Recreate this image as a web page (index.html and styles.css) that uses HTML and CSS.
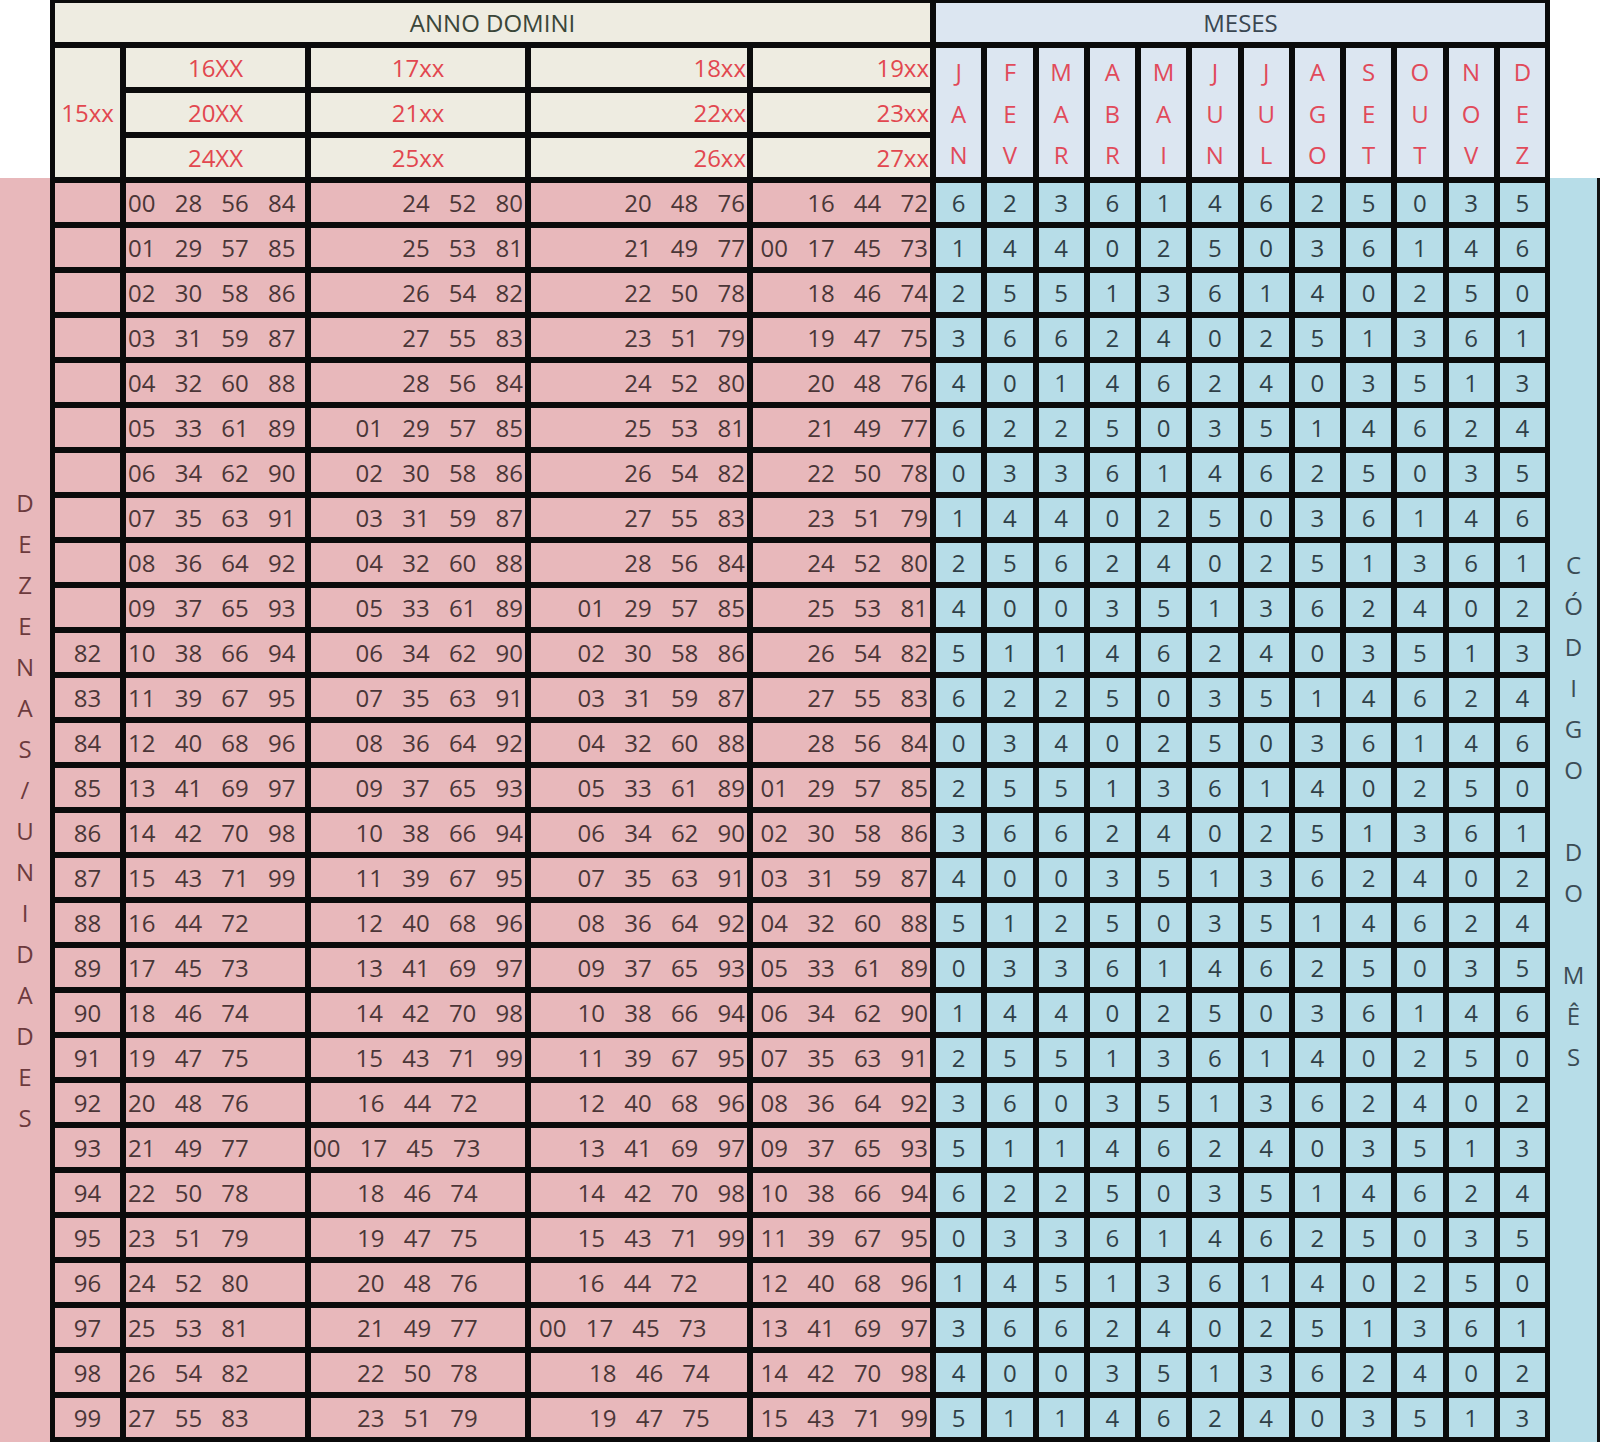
FILE: index.html
```html
<!DOCTYPE html>
<html lang="pt">
<head>
<meta charset="utf-8">
<title>Calendário perpétuo</title>
<link rel="stylesheet" href="styles.css">
</head>
<body>
<div class="page">
  <div class="strip strip-l"><span>D</span><span>E</span><span>Z</span><span>E</span><span>N</span><span>A</span><span>S</span><span>/</span><span>U</span><span>N</span><span>I</span><span>D</span><span>A</span><span>D</span><span>E</span><span>S</span></div>
  <div class="tbl">
    <div class="c hd ttl">ANNO DOMINI</div>
    <div class="c ttl-m">MESES</div>
    <div class="c hd y15">15xx</div>
    <div class="c hd">16XX</div>
    <div class="c hd">17xx</div>
    <div class="c hd hr">18xx</div>
    <div class="c hd hr">19xx</div>
    <div class="c mh"><span>J</span><span>A</span><span>N</span></div>
    <div class="c mh"><span>F</span><span>E</span><span>V</span></div>
    <div class="c mh"><span>M</span><span>A</span><span>R</span></div>
    <div class="c mh"><span>A</span><span>B</span><span>R</span></div>
    <div class="c mh"><span>M</span><span>A</span><span>I</span></div>
    <div class="c mh"><span>J</span><span>U</span><span>N</span></div>
    <div class="c mh"><span>J</span><span>U</span><span>L</span></div>
    <div class="c mh"><span>A</span><span>G</span><span>O</span></div>
    <div class="c mh"><span>S</span><span>E</span><span>T</span></div>
    <div class="c mh"><span>O</span><span>U</span><span>T</span></div>
    <div class="c mh"><span>N</span><span>O</span><span>V</span></div>
    <div class="c mh"><span>D</span><span>E</span><span>Z</span></div>
    <div class="c hd">20XX</div>
    <div class="c hd">21xx</div>
    <div class="c hd hr">22xx</div>
    <div class="c hd hr">23xx</div>
    <div class="c hd">24XX</div>
    <div class="c hd">25xx</div>
    <div class="c hd hr">26xx</div>
    <div class="c hd hr">27xx</div>

    <div class="c p k"></div><div class="c p l">00 28 56 84</div><div class="c p r">24 52 80</div><div class="c p r">20 48 76</div><div class="c p r">16 44 72</div><div class="c b">6</div><div class="c b">2</div><div class="c b">3</div><div class="c b">6</div><div class="c b">1</div><div class="c b">4</div><div class="c b">6</div><div class="c b">2</div><div class="c b">5</div><div class="c b">0</div><div class="c b">3</div><div class="c b">5</div>
    <div class="c p k"></div><div class="c p l">01 29 57 85</div><div class="c p r">25 53 81</div><div class="c p r">21 49 77</div><div class="c p r">00 17 45 73</div><div class="c b">1</div><div class="c b">4</div><div class="c b">4</div><div class="c b">0</div><div class="c b">2</div><div class="c b">5</div><div class="c b">0</div><div class="c b">3</div><div class="c b">6</div><div class="c b">1</div><div class="c b">4</div><div class="c b">6</div>
    <div class="c p k"></div><div class="c p l">02 30 58 86</div><div class="c p r">26 54 82</div><div class="c p r">22 50 78</div><div class="c p r">18 46 74</div><div class="c b">2</div><div class="c b">5</div><div class="c b">5</div><div class="c b">1</div><div class="c b">3</div><div class="c b">6</div><div class="c b">1</div><div class="c b">4</div><div class="c b">0</div><div class="c b">2</div><div class="c b">5</div><div class="c b">0</div>
    <div class="c p k"></div><div class="c p l">03 31 59 87</div><div class="c p r">27 55 83</div><div class="c p r">23 51 79</div><div class="c p r">19 47 75</div><div class="c b">3</div><div class="c b">6</div><div class="c b">6</div><div class="c b">2</div><div class="c b">4</div><div class="c b">0</div><div class="c b">2</div><div class="c b">5</div><div class="c b">1</div><div class="c b">3</div><div class="c b">6</div><div class="c b">1</div>
    <div class="c p k"></div><div class="c p l">04 32 60 88</div><div class="c p r">28 56 84</div><div class="c p r">24 52 80</div><div class="c p r">20 48 76</div><div class="c b">4</div><div class="c b">0</div><div class="c b">1</div><div class="c b">4</div><div class="c b">6</div><div class="c b">2</div><div class="c b">4</div><div class="c b">0</div><div class="c b">3</div><div class="c b">5</div><div class="c b">1</div><div class="c b">3</div>
    <div class="c p k"></div><div class="c p l">05 33 61 89</div><div class="c p r">01 29 57 85</div><div class="c p r">25 53 81</div><div class="c p r">21 49 77</div><div class="c b">6</div><div class="c b">2</div><div class="c b">2</div><div class="c b">5</div><div class="c b">0</div><div class="c b">3</div><div class="c b">5</div><div class="c b">1</div><div class="c b">4</div><div class="c b">6</div><div class="c b">2</div><div class="c b">4</div>
    <div class="c p k"></div><div class="c p l">06 34 62 90</div><div class="c p r">02 30 58 86</div><div class="c p r">26 54 82</div><div class="c p r">22 50 78</div><div class="c b">0</div><div class="c b">3</div><div class="c b">3</div><div class="c b">6</div><div class="c b">1</div><div class="c b">4</div><div class="c b">6</div><div class="c b">2</div><div class="c b">5</div><div class="c b">0</div><div class="c b">3</div><div class="c b">5</div>
    <div class="c p k"></div><div class="c p l">07 35 63 91</div><div class="c p r">03 31 59 87</div><div class="c p r">27 55 83</div><div class="c p r">23 51 79</div><div class="c b">1</div><div class="c b">4</div><div class="c b">4</div><div class="c b">0</div><div class="c b">2</div><div class="c b">5</div><div class="c b">0</div><div class="c b">3</div><div class="c b">6</div><div class="c b">1</div><div class="c b">4</div><div class="c b">6</div>
    <div class="c p k"></div><div class="c p l">08 36 64 92</div><div class="c p r">04 32 60 88</div><div class="c p r">28 56 84</div><div class="c p r">24 52 80</div><div class="c b">2</div><div class="c b">5</div><div class="c b">6</div><div class="c b">2</div><div class="c b">4</div><div class="c b">0</div><div class="c b">2</div><div class="c b">5</div><div class="c b">1</div><div class="c b">3</div><div class="c b">6</div><div class="c b">1</div>
    <div class="c p k"></div><div class="c p l">09 37 65 93</div><div class="c p r">05 33 61 89</div><div class="c p r">01 29 57 85</div><div class="c p r">25 53 81</div><div class="c b">4</div><div class="c b">0</div><div class="c b">0</div><div class="c b">3</div><div class="c b">5</div><div class="c b">1</div><div class="c b">3</div><div class="c b">6</div><div class="c b">2</div><div class="c b">4</div><div class="c b">0</div><div class="c b">2</div>
    <div class="c p k">82</div><div class="c p l">10 38 66 94</div><div class="c p r">06 34 62 90</div><div class="c p r">02 30 58 86</div><div class="c p r">26 54 82</div><div class="c b">5</div><div class="c b">1</div><div class="c b">1</div><div class="c b">4</div><div class="c b">6</div><div class="c b">2</div><div class="c b">4</div><div class="c b">0</div><div class="c b">3</div><div class="c b">5</div><div class="c b">1</div><div class="c b">3</div>
    <div class="c p k">83</div><div class="c p l">11 39 67 95</div><div class="c p r">07 35 63 91</div><div class="c p r">03 31 59 87</div><div class="c p r">27 55 83</div><div class="c b">6</div><div class="c b">2</div><div class="c b">2</div><div class="c b">5</div><div class="c b">0</div><div class="c b">3</div><div class="c b">5</div><div class="c b">1</div><div class="c b">4</div><div class="c b">6</div><div class="c b">2</div><div class="c b">4</div>
    <div class="c p k">84</div><div class="c p l">12 40 68 96</div><div class="c p r">08 36 64 92</div><div class="c p r">04 32 60 88</div><div class="c p r">28 56 84</div><div class="c b">0</div><div class="c b">3</div><div class="c b">4</div><div class="c b">0</div><div class="c b">2</div><div class="c b">5</div><div class="c b">0</div><div class="c b">3</div><div class="c b">6</div><div class="c b">1</div><div class="c b">4</div><div class="c b">6</div>
    <div class="c p k">85</div><div class="c p l">13 41 69 97</div><div class="c p r">09 37 65 93</div><div class="c p r">05 33 61 89</div><div class="c p r">01 29 57 85</div><div class="c b">2</div><div class="c b">5</div><div class="c b">5</div><div class="c b">1</div><div class="c b">3</div><div class="c b">6</div><div class="c b">1</div><div class="c b">4</div><div class="c b">0</div><div class="c b">2</div><div class="c b">5</div><div class="c b">0</div>
    <div class="c p k">86</div><div class="c p l">14 42 70 98</div><div class="c p r">10 38 66 94</div><div class="c p r">06 34 62 90</div><div class="c p r">02 30 58 86</div><div class="c b">3</div><div class="c b">6</div><div class="c b">6</div><div class="c b">2</div><div class="c b">4</div><div class="c b">0</div><div class="c b">2</div><div class="c b">5</div><div class="c b">1</div><div class="c b">3</div><div class="c b">6</div><div class="c b">1</div>
    <div class="c p k">87</div><div class="c p l">15 43 71 99</div><div class="c p r">11 39 67 95</div><div class="c p r">07 35 63 91</div><div class="c p r">03 31 59 87</div><div class="c b">4</div><div class="c b">0</div><div class="c b">0</div><div class="c b">3</div><div class="c b">5</div><div class="c b">1</div><div class="c b">3</div><div class="c b">6</div><div class="c b">2</div><div class="c b">4</div><div class="c b">0</div><div class="c b">2</div>
    <div class="c p k">88</div><div class="c p l">16 44 72</div><div class="c p r">12 40 68 96</div><div class="c p r">08 36 64 92</div><div class="c p r">04 32 60 88</div><div class="c b">5</div><div class="c b">1</div><div class="c b">2</div><div class="c b">5</div><div class="c b">0</div><div class="c b">3</div><div class="c b">5</div><div class="c b">1</div><div class="c b">4</div><div class="c b">6</div><div class="c b">2</div><div class="c b">4</div>
    <div class="c p k">89</div><div class="c p l">17 45 73</div><div class="c p r">13 41 69 97</div><div class="c p r">09 37 65 93</div><div class="c p r">05 33 61 89</div><div class="c b">0</div><div class="c b">3</div><div class="c b">3</div><div class="c b">6</div><div class="c b">1</div><div class="c b">4</div><div class="c b">6</div><div class="c b">2</div><div class="c b">5</div><div class="c b">0</div><div class="c b">3</div><div class="c b">5</div>
    <div class="c p k">90</div><div class="c p l">18 46 74</div><div class="c p r">14 42 70 98</div><div class="c p r">10 38 66 94</div><div class="c p r">06 34 62 90</div><div class="c b">1</div><div class="c b">4</div><div class="c b">4</div><div class="c b">0</div><div class="c b">2</div><div class="c b">5</div><div class="c b">0</div><div class="c b">3</div><div class="c b">6</div><div class="c b">1</div><div class="c b">4</div><div class="c b">6</div>
    <div class="c p k">91</div><div class="c p l">19 47 75</div><div class="c p r">15 43 71 99</div><div class="c p r">11 39 67 95</div><div class="c p r">07 35 63 91</div><div class="c b">2</div><div class="c b">5</div><div class="c b">5</div><div class="c b">1</div><div class="c b">3</div><div class="c b">6</div><div class="c b">1</div><div class="c b">4</div><div class="c b">0</div><div class="c b">2</div><div class="c b">5</div><div class="c b">0</div>
    <div class="c p k">92</div><div class="c p l">20 48 76</div><div class="c p l in1">16 44 72</div><div class="c p r">12 40 68 96</div><div class="c p r">08 36 64 92</div><div class="c b">3</div><div class="c b">6</div><div class="c b">0</div><div class="c b">3</div><div class="c b">5</div><div class="c b">1</div><div class="c b">3</div><div class="c b">6</div><div class="c b">2</div><div class="c b">4</div><div class="c b">0</div><div class="c b">2</div>
    <div class="c p k">93</div><div class="c p l">21 49 77</div><div class="c p l">00 17 45 73</div><div class="c p r">13 41 69 97</div><div class="c p r">09 37 65 93</div><div class="c b">5</div><div class="c b">1</div><div class="c b">1</div><div class="c b">4</div><div class="c b">6</div><div class="c b">2</div><div class="c b">4</div><div class="c b">0</div><div class="c b">3</div><div class="c b">5</div><div class="c b">1</div><div class="c b">3</div>
    <div class="c p k">94</div><div class="c p l">22 50 78</div><div class="c p l in1">18 46 74</div><div class="c p r">14 42 70 98</div><div class="c p r">10 38 66 94</div><div class="c b">6</div><div class="c b">2</div><div class="c b">2</div><div class="c b">5</div><div class="c b">0</div><div class="c b">3</div><div class="c b">5</div><div class="c b">1</div><div class="c b">4</div><div class="c b">6</div><div class="c b">2</div><div class="c b">4</div>
    <div class="c p k">95</div><div class="c p l">23 51 79</div><div class="c p l in1">19 47 75</div><div class="c p r">15 43 71 99</div><div class="c p r">11 39 67 95</div><div class="c b">0</div><div class="c b">3</div><div class="c b">3</div><div class="c b">6</div><div class="c b">1</div><div class="c b">4</div><div class="c b">6</div><div class="c b">2</div><div class="c b">5</div><div class="c b">0</div><div class="c b">3</div><div class="c b">5</div>
    <div class="c p k">96</div><div class="c p l">24 52 80</div><div class="c p l in1">20 48 76</div><div class="c p l in1">16 44 72</div><div class="c p r">12 40 68 96</div><div class="c b">1</div><div class="c b">4</div><div class="c b">5</div><div class="c b">1</div><div class="c b">3</div><div class="c b">6</div><div class="c b">1</div><div class="c b">4</div><div class="c b">0</div><div class="c b">2</div><div class="c b">5</div><div class="c b">0</div>
    <div class="c p k">97</div><div class="c p l">25 53 81</div><div class="c p l in1">21 49 77</div><div class="c p l in0">00 17 45 73</div><div class="c p r">13 41 69 97</div><div class="c b">3</div><div class="c b">6</div><div class="c b">6</div><div class="c b">2</div><div class="c b">4</div><div class="c b">0</div><div class="c b">2</div><div class="c b">5</div><div class="c b">1</div><div class="c b">3</div><div class="c b">6</div><div class="c b">1</div>
    <div class="c p k">98</div><div class="c p l">26 54 82</div><div class="c p l in1">22 50 78</div><div class="c p l in2">18 46 74</div><div class="c p r">14 42 70 98</div><div class="c b">4</div><div class="c b">0</div><div class="c b">0</div><div class="c b">3</div><div class="c b">5</div><div class="c b">1</div><div class="c b">3</div><div class="c b">6</div><div class="c b">2</div><div class="c b">4</div><div class="c b">0</div><div class="c b">2</div>
    <div class="c p k">99</div><div class="c p l">27 55 83</div><div class="c p l in1">23 51 79</div><div class="c p l in2">19 47 75</div><div class="c p r">15 43 71 99</div><div class="c b">5</div><div class="c b">1</div><div class="c b">1</div><div class="c b">4</div><div class="c b">6</div><div class="c b">2</div><div class="c b">4</div><div class="c b">0</div><div class="c b">3</div><div class="c b">5</div><div class="c b">1</div><div class="c b">3</div>
  </div>
  <div class="strip strip-r"><span>C</span><span>Ó</span><span>D</span><span>I</span><span>G</span><span>O</span><span>&nbsp;</span><span>D</span><span>O</span><span>&nbsp;</span><span>M</span><span>Ê</span><span>S</span></div>
</div>
</body>
</html>
```

FILE: styles.css
```css
* {
  box-sizing: border-box;
  margin: 0;
  padding: 0;
}

body {
  width: 1600px;
  height: 1442px;
  overflow: hidden;
  background: #ffffff;
  font-family: "Open Sans", "Liberation Sans", sans-serif;
  font-size: 24px;
  color: #3c3c3c;
}

.page {
  display: grid;
  grid-template-columns: 50px 1500px 50px;
  grid-template-rows: 178px 1264px;
}

.strip {
  grid-row: 2;
  display: flex;
  flex-direction: column;
  align-items: center;
  justify-content: center;
}

.strip span {
  display: block;
  height: 41px;
  line-height: 41px;
}

.strip-l {
  grid-column: 1;
  background: #e8b8bb;
  color: #6c3a3d;
}

.strip-r {
  grid-column: 3;
  background: #b7dde8;
  color: #3b4c55;
  border-right: 3px solid #111111;
}

.tbl {
  grid-column: 2;
  grid-row: 1 / 3;
  display: grid;
  background: #0b0b0b;
  padding: 3px 5px 5px 5px;
  gap: 6px;
  grid-template-columns: 65px 179px 214px 216px 177px repeat(12, 1fr);
  grid-template-rows: repeat(32, 39px);
}

.c {
  display: flex;
  align-items: center;
  justify-content: center;
  white-space: pre;
  word-spacing: 13px;
  line-height: 1;
  overflow: hidden;
}

.hd {
  background: #eeece1;
  color: #e2474f;
}

.hr {
  justify-content: flex-end;
  padding-right: 1px;
}

.ttl {
  grid-column: 1 / 6;
  color: #3a4639;
  word-spacing: 0;
}

.ttl-m {
  grid-column: 6 / 18;
  background: #dce6f1;
  color: #3a4651;
}

.y15 {
  grid-row: span 3;
}

.mh {
  grid-row: span 3;
  background: #dce6f1;
  color: #e14a5a;
  flex-direction: column;
  padding-top: 2px;
}

.mh span {
  display: block;
  height: 41.5px;
  line-height: 41.5px;
}

.p {
  background: #e8b8bb;
  color: #4a3637;
}

.b {
  background: #b7dde8;
  color: #2f3f47;
}

.k {
  justify-content: center;
}

.l {
  justify-content: flex-start;
  padding-left: 2px;
}

.r {
  justify-content: flex-end;
  padding-right: 2px;
}

.in0 {
  padding-left: 8px;
}

.in1 {
  padding-left: 46px;
}

.in2 {
  padding-left: 58px;
}
```
